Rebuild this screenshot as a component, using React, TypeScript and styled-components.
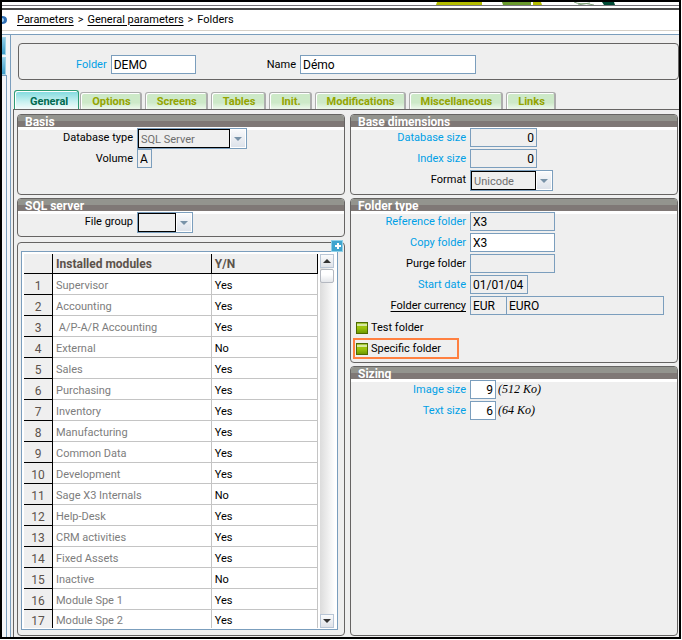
import React, { useId, useState } from 'react';
import styled, { createGlobalStyle, css } from 'styled-components';

const ink = '#000';
const line = '#666463';
const fieldLine = '#7b9ebd';
const surface = '#efefef';
const linkBlue = '#00a0e6';
const uiFont = "Roboto, 'Liberation Sans', sans-serif";

const GlobalStyle = createGlobalStyle`
  * { box-sizing: border-box; }
  body { margin: 0; background: #fff; }
  #root { display: flex; min-height: 100vh; padding: 0 1px 1px 0; }
  button, input, select { font: inherit; color: inherit; margin: 0; }
`;

const Frame = styled.div`
  flex: 1;
  min-width: 0;
  display: flex;
  flex-direction: column;
  border: 2px solid #000;
  background: #fff;
  color: ${ink};
  font: 11px/14px ${uiFont};
`;

const Banner = styled.header`
  display: flex;
  justify-content: flex-end;
  height: 4px;
  padding-right: 63px;
  border-bottom: 1px solid #77747a;
`;

const Breadcrumb = styled.nav`
  display: flex;
  align-items: center;
  gap: 4px;
  height: 23px;
  margin-top: 2px;
  border-top: 2px solid #4a4a4a;
  border-bottom: 1px solid #d6d0c8;
  padding-bottom: 1px;
  white-space: nowrap;

  svg { flex: none; margin-right: 6px; }
  a { color: inherit; text-underline-offset: 2px; }
`;

const Body = styled.div`
  flex: 1;
  display: flex;
  min-height: 0;
  margin-top: 3px;
`;

const Rail = styled.div`
  flex: none;
  width: 8px;
  display: flex;
  flex-direction: column;
  border-top: 1px solid ${fieldLine};
  background: #f3f5f8;
`;

const RailTile = styled.div`
  width: 4px;
  height: 18px;
  margin-top: 2px;
  border: solid #9fd3e6;
  border-width: 1px 1px 1px 0;
  background: linear-gradient(#8fcbe6, #3d9cc9);
`;

const RailPanel = styled.div`
  flex: 1;
  width: 5px;
  border: solid ${fieldLine};
  border-width: 1px 1px 0 0;
`;

const Work = styled.main`
  flex: 1;
  min-width: 0;
  display: flex;
  flex-direction: column;
  border: solid ${fieldLine};
  border-width: 1px 0 0 1px;
  padding: 8px 0 0 2px;
  background: ${surface};
`;

const Identity = styled.section`
  display: flex;
  align-items: center;
  height: 37px;
  margin-left: 5px;
  padding: 6px 0 0 57px;
  border: 1px solid ${line};
  border-radius: 4px;
  gap: 4px;

  label:nth-of-type(2) { margin-left: 67px; }
`;

const Tabs = styled.div`
  display: flex;
  align-items: flex-end;
  gap: 3px;
  margin-top: 10px;
  padding-left: 1px;
`;

const Tab = styled.button<{ $active: boolean }>`
  flex: none;
  height: 17px;
  padding: 2px 9px 0 11px;
  border: solid #adadad;
  border-width: 1px 2px 0 1px;
  border-radius: 3px 3px 0 0;
  background: linear-gradient(#cde9c8 0 60%, #eef8ec);
  box-shadow: inset 1px 1px #fff;
  color: #94a400;
  font: bold 11px/14px ${uiFont};
  white-space: nowrap;
  ${({ $active }) => $active && css`
    height: 19px;
    margin-right: -2px;
    padding: 4px 10px 0 15px;
    border-color: #2e9c74;
    border-width: 1px 1px 0;
    background: linear-gradient(#7fd9de, #c9f1f0 60%, #f4fbfb);
    color: #006a50;
  `}
`;

const Page = styled.div`
  flex: 1;
  display: grid;
  grid-template-columns: minmax(0, 1fr) minmax(0, 1fr);
  gap: 5px;
  padding: 4px 1px 1px 3px;
  border: solid ${line};
  border-width: 1px 0 0 1px;
`;

const Column = styled.div`
  display: flex;
  flex-direction: column;
  gap: 3px;
`;

const PanelBox = styled.section<{ $grow?: boolean }>`
  flex: ${({ $grow }) => ($grow ? 1 : 'none')};
  padding-bottom: 3px;
  border: 1px solid ${line};
  border-radius: 4px;
`;

const PanelTitle = styled.h2`
  height: 12px;
  margin: 0 0 1px;
  padding-left: 7px;
  border-radius: 3px 3px 0 0;
  background: linear-gradient(#93948e 0 50%, #7f7876 50%);
  box-shadow: 0 3px #fff;
  color: #fff;
  font: bold 12px/14px ${uiFont};
`;

const Row = styled.div`
  display: flex;
  align-items: flex-start;
  height: 21px;
`;

const Spacer = styled.div`
  height: 21px;
`;

const Label = styled.label<{ $blue?: boolean }>`
  color: ${({ $blue }) => ($blue ? linkBlue : ink)};
  white-space: nowrap;
`;

const RowLabel = styled(Label)`
  width: 115px;
  margin-right: 4px;
  padding-top: 3px;
  text-align: right;
  a { color: inherit; text-underline-offset: 2px; }
`;

const TextBox = styled.input<{ $w: number; $end?: boolean }>`
  width: ${({ $w }) => $w}px;
  height: 19px;
  padding: 1px 2px 0;
  border: 1px solid ${fieldLine};
  border-radius: 0;
  background: #fff;
  font-size: 12px;
  text-align: ${({ $end }) => ($end ? 'right' : 'left')};
  &:read-only { background: ${surface}; }
  & + & { margin-left: -1px; }
`;

const SelectBox = styled.div<{ $w: number }>`
  display: flex;
  width: ${({ $w }) => $w}px;
  height: 21px;
  border: 1px solid ${fieldLine};
  background: #fff;
`;

const SelectField = styled.select`
  appearance: none;
  flex: 1;
  min-width: 0;
  height: 19px;
  padding: 2px 2px 0;
  border: 1px solid #000;
  border-radius: 0;
  background: ${surface};
  color: #6e6e6e;
`;

const SelectArrow = styled.span`
  display: flex;
  align-items: center;
  justify-content: center;
  width: 16px;
  border: 1px solid #fff;
  background: linear-gradient(#f8f9fb, #dde2ea);
`;

const Note = styled.span`
  padding: 2px 0 0 2px;
  font: italic 12px/14px 'Liberation Serif', serif;
`;

const Choice = styled.label<{ $marked?: boolean }>`
  display: flex;
  align-items: center;
  gap: 3px;
  width: max-content;
  height: 21px;
  margin-left: 2px;
  padding: 0 16px 0 1px;
  border: 2px solid ${({ $marked }) => ($marked ? '#ff8040' : 'transparent')};
`;

const Tick = styled.input`
  appearance: none;
  width: 12px;
  height: 12px;
  border: 1px solid #4d6b00;
  background: linear-gradient(#a4c838 0 15%, #d7e9a0 15% 30%, #9dc40c 30% 50%, #6f9a00);
`;

const ListPanel = styled(PanelBox)`
  display: flex;
  flex-direction: column;
  margin-top: 2px;
  padding: 8px 6px 5px 3px;
  position: relative;
`;

const Expand = styled.button`
  position: absolute;
  top: -3px;
  right: 1px;
  width: 12px;
  height: 12px;
  padding: 0;
  border: 1px solid #8fd0e8;
  background: #3fa5cf;
  svg { display: block; }
`;

const ListFrame = styled.div`
  flex: 1;
  display: flex;
  gap: 2px;
  padding: 2px 2px 1px;
  border: 1px solid ${fieldLine};
  background: #fff;
`;

const Grid = styled.table`
  flex: 1;
  table-layout: fixed;
  border-collapse: separate;
  border-spacing: 0;

  th, td {
    height: 21px;
    padding: 3px 3px 0;
    border: solid #c4c4c4;
    border-width: 0 1px 1px 0;
    text-align: left;
    font-weight: normal;
    white-space: nowrap;
  }
  td:nth-child(2) { color: #7d7d7d; }
  thead th {
    height: 20px;
    padding: 0 3px;
    border-color: #000;
    background: ${surface};
    color: #5c524b;
    font: bold 12px/14px ${uiFont};
  }
  tbody th {
    border-color: #000;
    background: ${surface};
    color: #5c524b;
    font-size: 12px;
    text-align: center;
  }
  tbody tr:last-child > * { height: 18px; border-bottom: 0; }
`;

const NumberCol = styled.col`
  width: 29px;
`;

const NameCol = styled.col`
  width: 54%;
`;

const Scroller = styled.div`
  display: flex;
  flex-direction: column;
  width: 15px;
  background: linear-gradient(90deg, #dcdcdc, #fff);
`;

const ScrollKey = styled.button`
  display: flex;
  align-items: center;
  justify-content: center;
  width: 14px;
  height: 14px;
  padding: 0;
  border: 1px solid #b9c6d6;
  background: linear-gradient(#fafbfc, #dfe2e8);
`;

const Thumb = styled.div`
  width: 14px;
  height: 14px;
  margin: 1px 0 auto;
  border: 1px solid #b4b8c0;
  border-radius: 2px;
  background: linear-gradient(#fff 40%, #e4e6ea);
`;

const Chevron = ({ up = false, color = '#333' }: { up?: boolean; color?: string }) => (
  <svg width="8" height="4" viewBox="0 0 8 4" aria-hidden="true">
    <path d={up ? 'M0 4h8L4 0z' : 'M0 0h8L4 4z'} fill={color} />
  </svg>
);

type FieldProps = { label: React.ReactNode; value: string; w: number; blue?: boolean; end?: boolean; edit?: boolean; note?: string; extra?: { label: string; value: string; w: number } };

function Field({ label, value, w, blue, end, edit, note, extra }: FieldProps) {
  const id = useId();
  return (
    <Row>
      <RowLabel htmlFor={id} $blue={blue}>{label}</RowLabel>
      <TextBox id={id} $w={w} $end={end} defaultValue={value} readOnly={!edit} />
      {extra && <TextBox aria-label={extra.label} $w={extra.w} defaultValue={extra.value} readOnly />}
      {note && <Note>{note}</Note>}
    </Row>
  );
}

function Choose({ label, value, w }: { label: string; value: string; w: number }) {
  const id = useId();
  return (
    <Row>
      <RowLabel htmlFor={id}>{label}</RowLabel>
      <SelectBox $w={w}>
        <SelectField id={id} defaultValue={value}>
          <option>{value}</option>
        </SelectField>
        <SelectArrow><Chevron color="#7892a8" /></SelectArrow>
      </SelectBox>
    </Row>
  );
}

function Panel({ title, grow, children }: { title: string; grow?: boolean; children: React.ReactNode }) {
  return (
    <PanelBox $grow={grow}>
      <PanelTitle>{title}</PanelTitle>
      {children}
    </PanelBox>
  );
}

const tabs = ['General', 'Options', 'Screens', 'Tables', 'Init.', 'Modifications', 'Miscellaneous', 'Links'];

const modules: [string, string][] = [
  ['Supervisor', 'Yes'],
  ['Accounting', 'Yes'],
  ['\u00a0A/P-A/R Accounting', 'Yes'],
  ['External', 'No'],
  ['Sales', 'Yes'],
  ['Purchasing', 'Yes'],
  ['Inventory', 'Yes'],
  ['Manufacturing', 'Yes'],
  ['Common Data', 'Yes'],
  ['Development', 'Yes'],
  ['Sage X3 Internals', 'No'],
  ['Help-Desk', 'Yes'],
  ['CRM activities', 'Yes'],
  ['Fixed Assets', 'Yes'],
  ['Inactive', 'No'],
  ['Module Spe 1', 'Yes'],
  ['Module Spe 2', 'Yes'],
];

export default function App() {
  const [active, setActive] = useState('General');
  return (
    <>
      <GlobalStyle />
      <Frame>
        <Banner>
          <svg width="180" height="3" viewBox="0 0 180 3" aria-hidden="true">
            <path d="M1 0h45v3H0z" fill="#b5bd00" />
            <path d="M66 0h29v3H67z" fill="#6a9a2c" />
            <path d="M97 0h8l1 3h-9z" fill="#b5bd00" />
            <path d="M138 0q6 3 16 1M142 3q8-3 16 0" fill="none" stroke="#7fa07a" />
            <path d="M166 0h12l1 3h-11z" fill="#004a35" />
          </svg>
        </Banner>
        <Breadcrumb aria-label="Breadcrumb">
          <svg width="5" height="8" viewBox="0 0 5 8" aria-hidden="true">
            <path d="M0 0q5 0 5 4T0 8z" fill="#2f6fb5" />
            <path d="M0 2q2 0 2 2T0 6z" fill="#a9d4f5" />
          </svg>
          <a href="#parameters">Parameters</a>
          <span>&gt;</span>
          <a href="#general">General parameters</a>
          <span>&gt;</span>
          <span>Folders</span>
        </Breadcrumb>
        <Body>
          <Rail>
            <RailTile />
            <RailTile />
            <RailPanel />
          </Rail>
          <Work>
            <Identity>
              <Label htmlFor="folder" $blue>Folder</Label>
              <TextBox id="folder" $w={85} defaultValue="DEMO" />
              <Label htmlFor="name">Name</Label>
              <TextBox id="name" $w={176} defaultValue="Démo" />
            </Identity>
            <Tabs role="tablist">
              {tabs.map((t) => (
                <Tab key={t} role="tab" type="button" aria-selected={t === active} $active={t === active} onClick={() => setActive(t)}>
                  {t}
                </Tab>
              ))}
            </Tabs>
            <Page>
              <Column>
                <Panel title="Basis">
                  <Choose label="Database type" value="SQL Server" w={110} />
                  <Field label="Volume" value="A" w={15} />
                  <Spacer />
                </Panel>
                <Panel title="SQL server">
                  <Choose label="File group" value="" w={56} />
                </Panel>
                <ListPanel $grow>
                  <Expand type="button" aria-label="Expand list">
                    <svg width="10" height="10" viewBox="0 0 10 10" aria-hidden="true">
                      <path d="M5 2h2v2h2v2H7v2H5V6H3V4h2z" fill="#fff" />
                    </svg>
                  </Expand>
                  <ListFrame>
                    <Grid>
                      <colgroup><NumberCol /><NameCol /><col /></colgroup>
                      <thead>
                        <tr><th aria-label="Row" /><th>Installed modules</th><th>Y/N</th></tr>
                      </thead>
                      <tbody>
                        {modules.map(([name, on], i) => (
                          <tr key={name}><th scope="row">{i + 1}</th><td>{name}</td><td>{on}</td></tr>
                        ))}
                      </tbody>
                    </Grid>
                    <Scroller>
                      <ScrollKey type="button" aria-label="Scroll up"><Chevron up /></ScrollKey>
                      <Thumb />
                      <ScrollKey type="button" aria-label="Scroll down"><Chevron /></ScrollKey>
                    </Scroller>
                  </ListFrame>
                </ListPanel>
              </Column>
              <Column>
                <Panel title="Base dimensions">
                  <Field label="Database size" value="0" w={67} blue end />
                  <Field label="Index size" value="0" w={67} blue end />
                  <Choose label="Format" value="Unicode" w={83} />
                </Panel>
                <Panel title="Folder type">
                  <Field label="Reference folder" value="X3" w={85} blue />
                  <Field label="Copy folder" value="X3" w={85} blue edit />
                  <Field label="Purge folder" value="" w={85} />
                  <Field label="Start date" value="01/01/04" w={58} blue />
                  <Field label={<a href="#currency">Folder currency</a>} value="EUR" w={37} extra={{ label: 'Currency name', value: 'EURO', w: 158 }} />
                  <Choice><Tick type="checkbox" />Test folder</Choice>
                  <Choice $marked><Tick type="checkbox" />Specific folder</Choice>
                </Panel>
                <Panel title="Sizing" grow>
                  <Field label="Image size" value="9" w={26} blue end edit note="(512 Ko)" />
                  <Field label="Text size" value="6" w={26} blue end edit note="(64 Ko)" />
                </Panel>
              </Column>
            </Page>
          </Work>
        </Body>
      </Frame>
    </>
  );
}
